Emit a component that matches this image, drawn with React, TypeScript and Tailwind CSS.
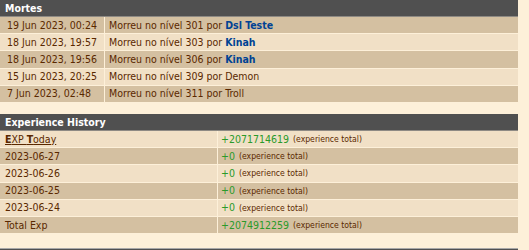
import React from "react";

const font = "font-['DejaVu_Sans_Condensed','DejaVu_Sans',sans-serif]";

function Header({ title }: { title: string }) {
  return (
    <div className="h-[16px] bg-[#505050] border-b border-[#8e8a84] box-content flex items-center pl-[5px] text-white font-bold text-[10.5px] leading-none">
      {title}
    </div>
  );
}

const deaths: { date: string; level: number; by: string; link: boolean }[] = [
  { date: "19 Jun 2023, 00:24", level: 301, by: "Dsl Teste", link: true },
  { date: "18 Jun 2023, 19:57", level: 303, by: "Kinah", link: true },
  { date: "18 Jun 2023, 19:56", level: 306, by: "Kinah", link: true },
  { date: "15 Jun 2023, 20:25", level: 309, by: "Demon", link: false },
  { date: "7 Jun 2023, 02:48", level: 311, by: "Troll", link: false },
];

const exp: { label: string; value: string }[] = [
  { label: "EXP Today", value: "+2071714619" },
  { label: "2023-06-27", value: "+0" },
  { label: "2023-06-26", value: "+0" },
  { label: "2023-06-25", value: "+0" },
  { label: "2023-06-24", value: "+0" },
  { label: "Total Exp", value: "+2074912259" },
];

export default function App() {
  return (
    <div className={`w-[529px] h-[250px] overflow-hidden bg-[#fdf0d9] text-[#5a2800] ${font} text-[10.5px]`}>
      <div className="w-[518px] flex flex-col">
        <Header title="Mortes" />
        <div className="flex flex-col gap-px">
          {deaths.map((d, i) => (
            <div key={i} className="flex gap-px h-[16.2px]">
              <div className={`w-[104px] shrink-0 pl-[7px] flex items-center pt-[1px] whitespace-nowrap ${i % 2 === 0 ? "bg-[#d4c0a1]" : "bg-[#f1e0c6]"}`}>
                {d.date}
              </div>
              <div className={`flex-1 pl-[4px] flex items-center pt-[1px] whitespace-nowrap ${i % 2 === 0 ? "bg-[#d4c0a1]" : "bg-[#f1e0c6]"}`}>
                Morreu no nível {d.level} por&nbsp;
                {d.link ? (
                  <span className="text-[#004294] font-bold">{d.by}</span>
                ) : (
                  <span>{d.by}</span>
                )}
              </div>
            </div>
          ))}
        </div>

        <div className="h-[12px]" />
        <Header title="Experience History" />
        <div className="flex flex-col gap-px">
          {exp.map((e, i) => (
            <div key={i} className="flex gap-px h-[16.2px]">
              <div className={`w-[217px] shrink-0 pl-[5px] flex items-center pt-[1px] whitespace-nowrap ${i % 2 === 0 ? "bg-[#f1e0c6]" : "bg-[#d4c0a1]"}`}>
                {i === 0 ? (
                  <span className="underline">
                    <b>E</b>XP <b>T</b>oday
                  </span>
                ) : (
                  e.label
                )}
              </div>
              <div className={`flex-1 pl-[3px] flex items-center pt-[1px] whitespace-nowrap ${i % 2 === 0 ? "bg-[#f1e0c6]" : "bg-[#d4c0a1]"}`}>
                <span className="text-[#2a9a2a]">{e.value}</span>
                <span className="text-[8.6px] ml-[4px]">(experience total)</span>
              </div>
            </div>
          ))}
        </div>
        <div className="h-[15px]" />
        <div className="h-[16px] bg-[#505050] border-t border-[#a8a8a8]" />
      </div>
    </div>
  );
}
